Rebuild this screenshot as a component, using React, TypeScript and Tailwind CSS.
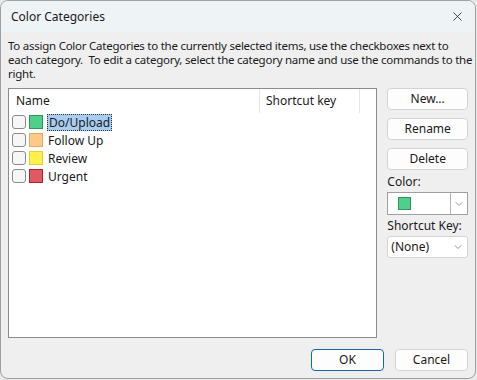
import { X, ChevronDown } from "lucide-react"

const categories = [
  { name: "Do/Upload", fill: "bg-[#4fcf8a]", border: "border-[#2a9a5c]", selected: true },
  { name: "Follow Up", fill: "bg-[#ffc987]", border: "border-[#e9a862]", selected: false },
  { name: "Review", fill: "bg-[#fff04e]", border: "border-[#e3cf2e]", selected: false },
  { name: "Urgent", fill: "bg-[#e05a64]", border: "border-[#b2222e]", selected: false },
]

function SideButton({ label }: { label: string }) {
  return (
    <button className="h-[22px] w-full rounded-[4px] border border-[#d3d3d3] bg-[#fdfdfd] text-[12px] text-[#1a1a1a]">
      {label}
    </button>
  )
}

export default function App() {
  return (
    <div className="h-[380px] w-[477px] bg-[#e9e9e9] font-['Segoe_UI','Noto_Sans',sans-serif] text-[12px] text-[#1a1a1a]">
      <div className="flex h-[379px] w-[476px] flex-col overflow-hidden rounded-[8px] border border-[#a0a0a0] bg-[#efefef]">
        {/* title bar */}
        <div className="flex h-[31px] items-center justify-between bg-[#eef3f5] pl-[10px] pr-[10px]">
          <span className="text-[12px]">Color Categories</span>
          <X size={15} strokeWidth={1.3} className="text-[#222]" />
        </div>

        <div className="flex flex-1 flex-col px-[7px] pt-[7px]">
          <p className="w-[465px] text-[11.5px] leading-[14px] tracking-[-0.25px]">
            To assign Color Categories to the currently selected items, use the checkboxes next to each category.&nbsp; To edit a category, select the category name and use the commands to the right.
          </p>

          <div className="mt-[7px] flex gap-[10px]">
            {/* list */}
            <div className="h-[250px] w-[371px] border border-[#8c8c8c] bg-white">
              <div className="flex h-[24px] items-center">
                <div className="w-[250px] pl-[7px]">Name</div>
                <div className="h-full w-px bg-[#e5e5e5]" />
                <div className="w-[99px] pl-[6px]">Shortcut key</div>
                <div className="h-full w-px bg-[#e5e5e5]" />
              </div>
              <div>
                {categories.map((c) => (
                  <div key={c.name} className="flex h-[18px] items-center pl-[3px]">
                    <div className="h-[14px] w-[14px] rounded-[3px] border border-[#8a8a8a] bg-[#f6f6f6]" />
                    <div className={`ml-[3px] h-[14px] w-[14px] border ${c.fill} ${c.border}`} />
                    {c.selected ? (
                      <span className="ml-[4px] border border-dotted border-[#333] bg-[#a8cdf0] px-[1px] leading-[15px]">
                        {c.name}
                      </span>
                    ) : (
                      <span className="ml-[5px] leading-[15px]">{c.name}</span>
                    )}
                  </div>
                ))}
              </div>
            </div>

            {/* side controls */}
            <div className="flex w-[81px] flex-col">
              <div className="flex flex-col gap-[8px]">
                <SideButton label="New..." />
                <SideButton label="Rename" />
                <SideButton label="Delete" />
              </div>
              <div className="mt-[4px] leading-[15px]">Color:</div>
              <div className="mt-[3px] flex h-[23px] items-center border border-[#a0a0a0] bg-white">
                <div className="ml-[10px] h-[13px] w-[13px] border border-[#2a9a5c] bg-[#4fcf8a]" />
                <div className="flex-1" />
                <div className="flex h-full w-[17px] items-center justify-center border-l border-[#b5b5b5]">
                  <ChevronDown size={12} strokeWidth={1.2} className="text-[#555]" />
                </div>
              </div>
              <div className="mt-[3px] leading-[15px]">Shortcut Key:</div>
              <div className="mt-[3px] flex h-[22px] items-center justify-between rounded-[3px] border border-[#d3d3d3] bg-white pl-[3px] pr-[3px]">
                <span>(None)</span>
                <ChevronDown size={12} strokeWidth={1.2} className="text-[#555]" />
              </div>
            </div>
          </div>

          <div className="mt-[11px] flex justify-end gap-[11px]">
            <button className="h-[22px] w-[73px] rounded-[4px] border border-[#0f67b8] bg-[#fdfdfd] text-[12px]">
              OK
            </button>
            <button className="h-[22px] w-[73px] rounded-[4px] border border-[#d3d3d3] bg-[#fdfdfd] text-[12px]">
              Cancel
            </button>
          </div>
        </div>
      </div>
    </div>
  )
}
